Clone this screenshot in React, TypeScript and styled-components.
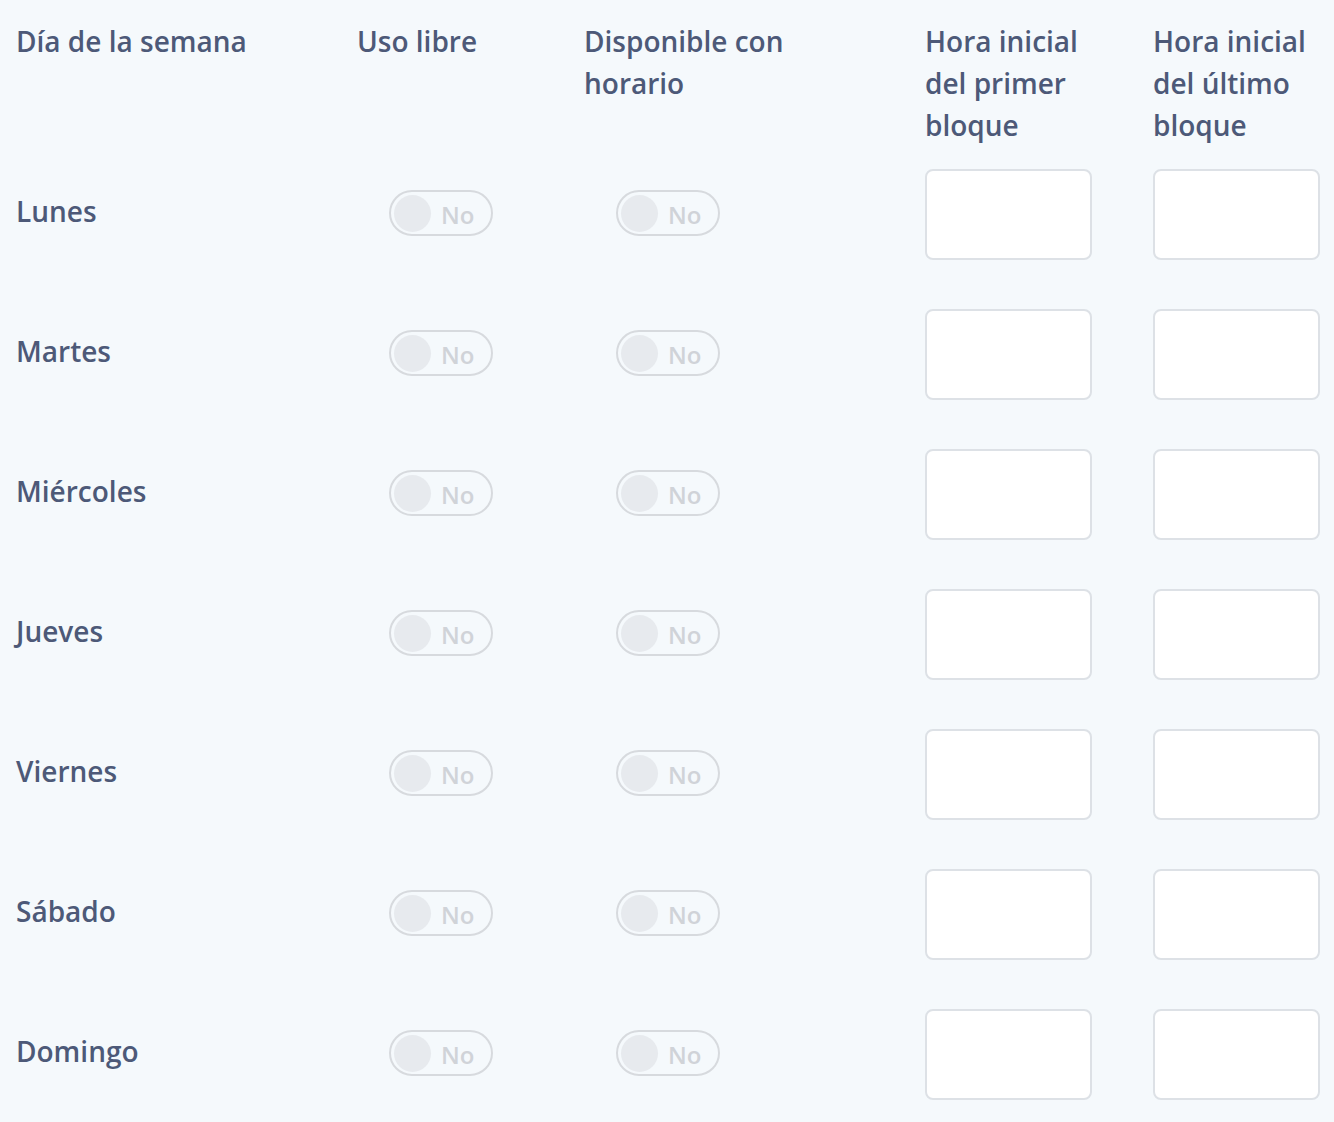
import * as React from "react";
import styled, { createGlobalStyle } from "styled-components";

const GlobalStyle = createGlobalStyle`
  html, body {
    margin: 0;
    padding: 0;
    background: #f5f9fc;
  }
  body {
    font-family: "Open Sans", "Liberation Sans", sans-serif;
    color: #4d5978;
  }
`;

const Table = styled.div`
  display: grid;
  grid-template-columns: 341px 227px 341px 228px 1fr;
  padding: 20px 0 0 16px;
  width: 1334px;
  box-sizing: border-box;
`;

const HeadCell = styled.div<{ $max?: number }>`
  font-size: 28px;
  font-weight: 600;
  line-height: 42px;
  margin-bottom: -3px;
  max-width: ${(p) => (p.$max ? `${p.$max}px` : "none")};
`;

const Cell = styled.div`
  height: 140px;
  display: flex;
  align-items: center;
`;

const DayLabel = styled.span`
  font-size: 28px;
  font-weight: 600;
  margin-top: -4px;
`;

const Toggle = styled.div`
  margin-left: 32px;
  width: 104px;
  height: 46px;
  box-sizing: border-box;
  border: 2px solid #d7dade;
  border-radius: 23px;
  display: flex;
  align-items: center;
  padding-left: 3px;
  gap: 10px;
`;

const Knob = styled.span`
  width: 37px;
  height: 37px;
  border-radius: 50%;
  background: #e7eaee;
`;

const ToggleText = styled.span`
  font-size: 24px;
  font-weight: 600;
  color: #d0d3d8;
  margin-top: 2px;
`;

const TimeBox = styled.input`
  width: 167px;
  height: 91px;
  box-sizing: border-box;
  border: 2px solid #dde1e6;
  border-radius: 8px;
  background: #fff;
  outline: none;
  margin-top: 2px;
`;

const days = ["Lunes", "Martes", "Miércoles", "Jueves", "Viernes", "Sábado", "Domingo"];

const Switch = () => (
  <Toggle>
    <Knob />
    <ToggleText>No</ToggleText>
  </Toggle>
);

const App = (): JSX.Element => {
  return (
    <>
      <GlobalStyle />
      <Table>
        <HeadCell>Día de la semana</HeadCell>
        <HeadCell>Uso libre</HeadCell>
        <HeadCell $max={230}>Disponible con horario</HeadCell>
        <HeadCell $max={170}>Hora inicial del primer bloque</HeadCell>
        <HeadCell $max={170}>Hora inicial del último bloque</HeadCell>
        {days.map((d) => (
          <React.Fragment key={d}>
            <Cell>
              <DayLabel>{d}</DayLabel>
            </Cell>
            <Cell>
              <Switch />
            </Cell>
            <Cell>
              <Switch />
            </Cell>
            <Cell>
              <TimeBox type="text" />
            </Cell>
            <Cell>
              <TimeBox type="text" />
            </Cell>
          </React.Fragment>
        ))}
      </Table>
    </>
  );
};

export default App;
